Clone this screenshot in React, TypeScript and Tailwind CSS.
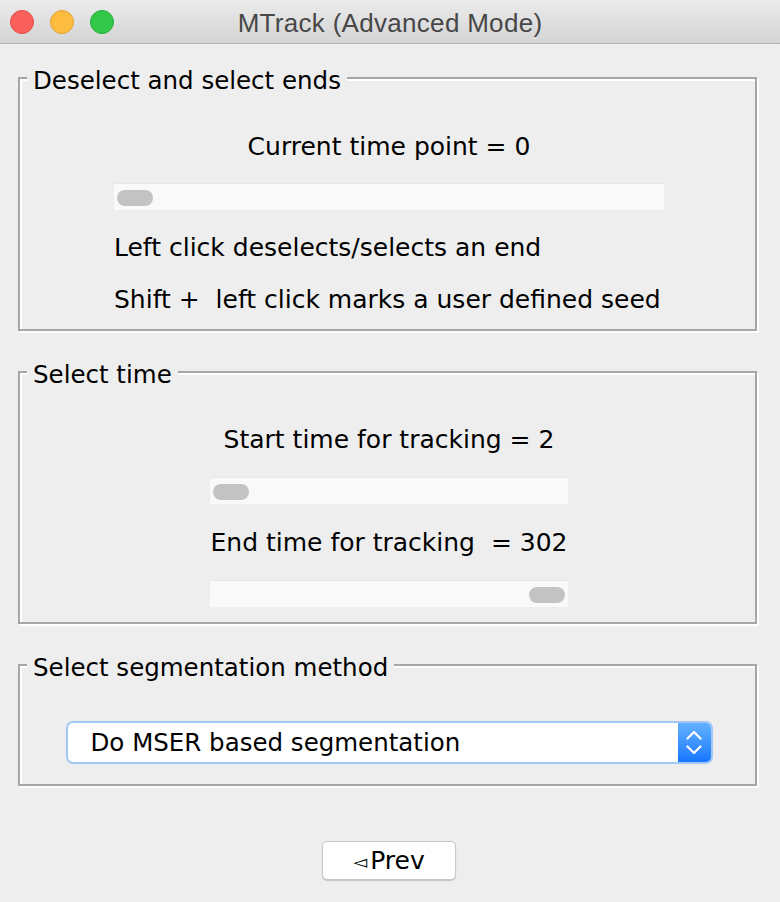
import React from "react";

function Slider({ className, end }: { className: string; end?: boolean }) {
  return (
    <div
      className={
        "h-[27px] bg-[#f9f9f9] border-t border-[#e7e7e7] flex items-center px-[3px] " +
        (end ? "justify-end " : "justify-start ") +
        className
      }
    >
      <div className="w-[36px] h-[16px] rounded-full bg-[#c3c3c3] mt-[1px]" />
    </div>
  );
}

function Panel({ title, children }: { title: string; children: React.ReactNode }) {
  return (
    <fieldset className="m-0 p-0 min-w-0 border-2 border-[#a6a6a6] shadow-[inset_2px_2px_0_#ffffff,2px_2px_0_#ffffff]">
      <legend className="ml-[7px] px-[6px] pt-[6px] leading-[28px] text-[24.5px] bg-[#eeeeee] whitespace-nowrap">
        {title}
      </legend>
      {children}
    </fieldset>
  );
}

export default function App() {
  return (
    <div className="w-[780px] min-h-[902px] bg-[#eeeeee] font-['DejaVu_Sans',sans-serif] text-black">
      {/* Title bar */}
      <div className="h-[44px] grid grid-cols-[1fr_auto_1fr] items-center border-b border-[#b3b3b3] bg-gradient-to-b from-[#ebebeb] to-[#d4d4d4]">
        <div className="flex items-center gap-[16px] pl-[10px]">
          <div className="w-[24px] h-[24px] rounded-full bg-[#fc605c] border border-[#de4b45]" />
          <div className="w-[24px] h-[24px] rounded-full bg-[#fdbc40] border border-[#dea134]" />
          <div className="w-[24px] h-[24px] rounded-full bg-[#34c84a] border border-[#27aa35]" />
        </div>
        <div className="pt-[3px] font-['Liberation_Sans',Arial,sans-serif] text-[26px] tracking-[0.3px] text-[#474747] leading-[30px] whitespace-nowrap">
          MTrack (Advanced Mode)
        </div>
        <div />
      </div>

      <div className="pl-[18px] pr-[23px] pt-[17px] flex flex-col">
        {/* Panel 1 */}
        <Panel title="Deselect and select ends">
          <div className="pl-[3px] flex justify-center">
            <div className="w-[550px] flex flex-col pb-[14px] text-[25px]">
              <div className="mt-[37px] text-center leading-[30px] whitespace-nowrap">Current time point = 0</div>
              <Slider className="mt-[21px] w-[550px]" />
              <div className="mt-[23px] leading-[30px] whitespace-nowrap">Left click deselects/selects an end</div>
              <div className="mt-[22px] leading-[30px] whitespace-pre">Shift +  left click marks a user defined seed</div>
            </div>
          </div>
        </Panel>

        {/* Panel 2 */}
        <div className="mt-[24px]">
          <Panel title="Select time">
            <div className="pl-[3px] flex justify-center">
              <div className="w-[358px] flex flex-col items-center pb-[15px] text-[25px]">
                <div className="mt-[36px] text-center leading-[30px] whitespace-nowrap">Start time for tracking = 2</div>
                <Slider className="mt-[22px] w-[358px]" />
                <div className="mt-[24px] text-center leading-[30px] whitespace-pre">End time for tracking  = 302</div>
                <Slider className="mt-[22px] w-[358px]" end />
              </div>
            </div>
          </Panel>
        </div>

        {/* Panel 3 */}
        <div className="mt-[24px]">
          <Panel title="Select segmentation method">
            <div className="pl-[3px] pt-[39px] pb-[20px] flex justify-center">
              <div className="w-[647px] h-[43px] flex items-stretch rounded-[7px] border-2 border-[#a4c8f6] bg-white overflow-hidden">
                <div className="flex-1 flex items-center pl-[23px] text-[24.5px] leading-[30px] whitespace-nowrap">
                  Do MSER based segmentation
                </div>
                <div className="w-[33px] flex flex-col items-center justify-center gap-[5px] bg-gradient-to-b from-[#62b1ff] to-[#1676ff]">
                  <svg width="16" height="10" viewBox="0 0 16 10">
                    <polyline points="1.5,8.5 8,2 14.5,8.5" fill="none" stroke="#ffffff" strokeWidth="2.2" strokeLinecap="round" strokeLinejoin="round" />
                  </svg>
                  <svg width="16" height="10" viewBox="0 0 16 10">
                    <polyline points="1.5,1.5 8,8 14.5,1.5" fill="none" stroke="#ffffff" strokeWidth="2.2" strokeLinecap="round" strokeLinejoin="round" />
                  </svg>
                </div>
              </div>
            </div>
          </Panel>
        </div>

        {/* Prev button */}
        <div className="mt-[55px] flex justify-center pl-[3px]">
          <button className="w-[134px] h-[39px] bg-white rounded-[5px] border border-[#c6c6c6] shadow-[0_1px_1px_rgba(0,0,0,0.18)] flex items-center justify-center text-[25px] leading-[30px]">
            <span className="text-[18px] leading-[18px] mr-[3px] mt-[3px]">◅</span>
            <span>Prev</span>
          </button>
        </div>
      </div>
    </div>
  );
}
